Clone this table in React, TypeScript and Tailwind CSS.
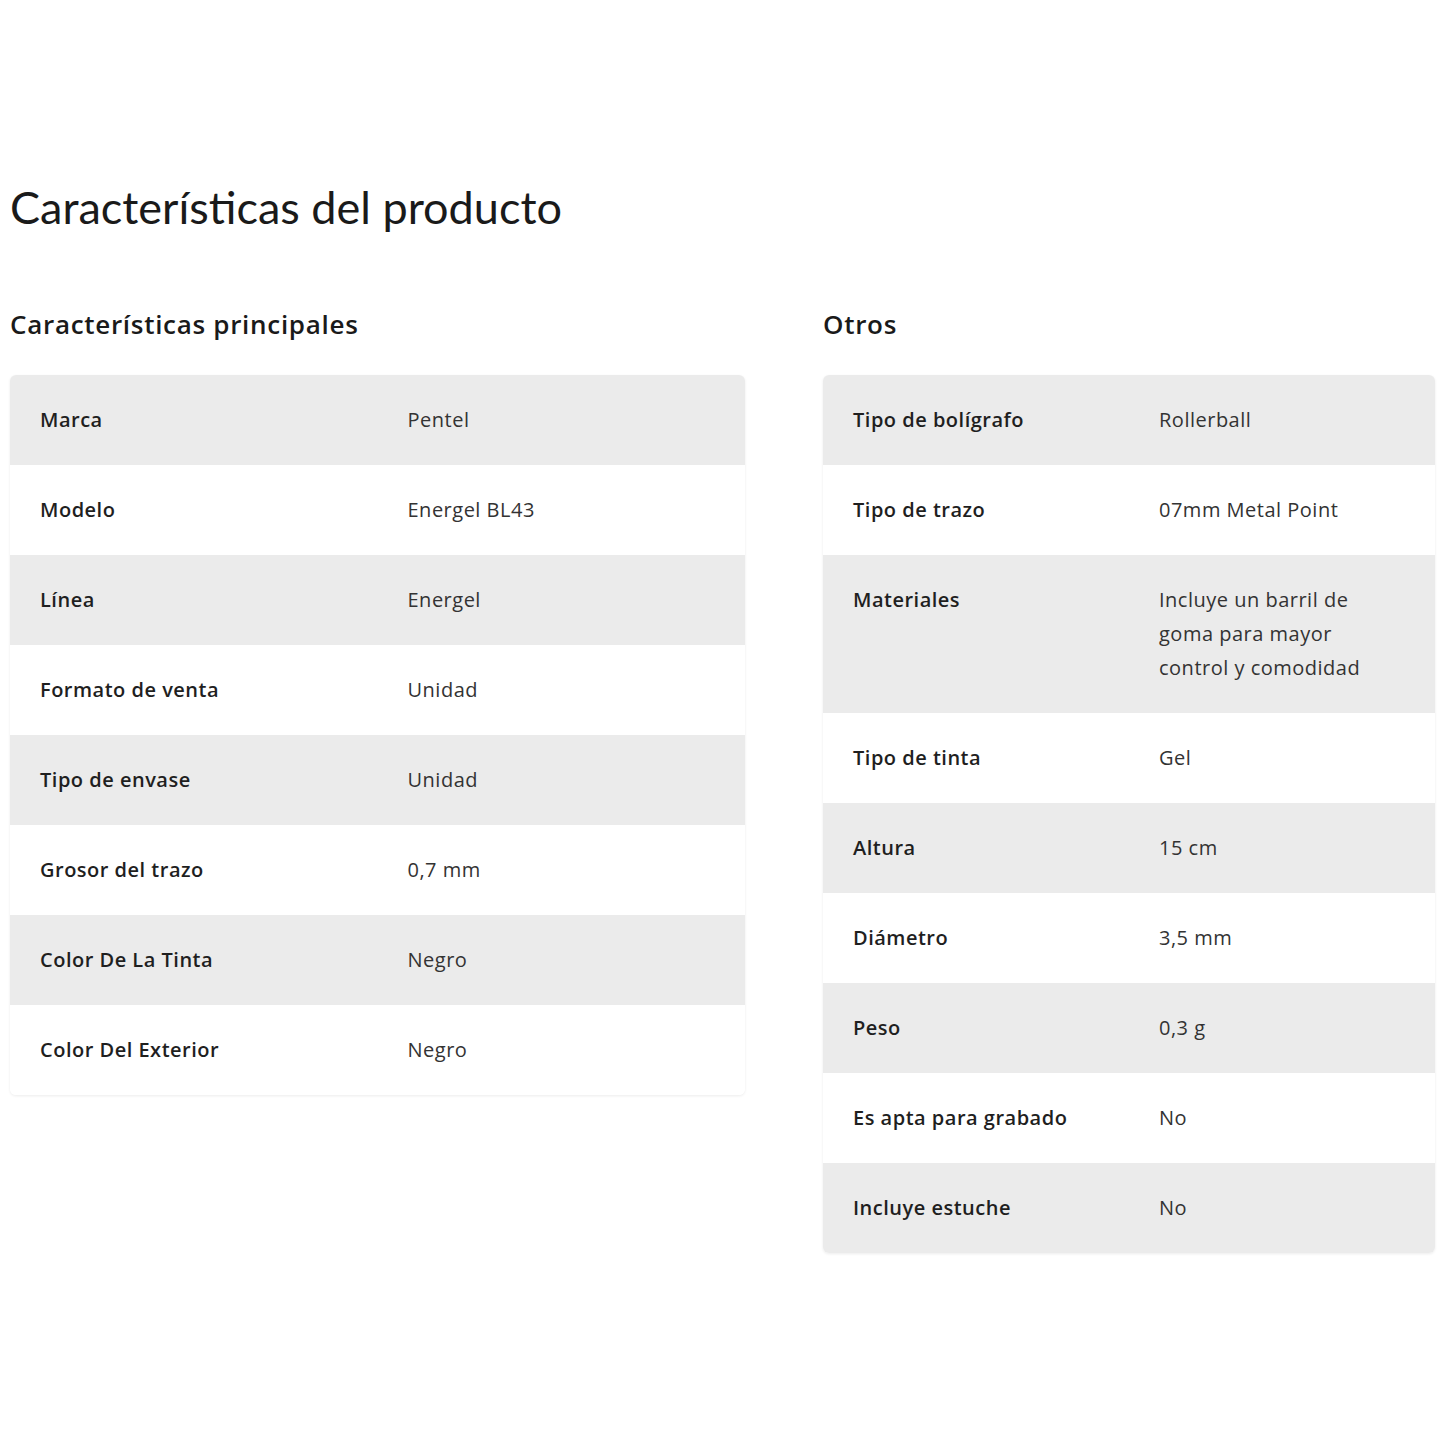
import React from "react";

type Row = { label: string; value: React.ReactNode };

const principales: Row[] = [
  { label: "Marca", value: "Pentel" },
  { label: "Modelo", value: "Energel BL43" },
  { label: "Línea", value: "Energel" },
  { label: "Formato de venta", value: "Unidad" },
  { label: "Tipo de envase", value: "Unidad" },
  { label: "Grosor del trazo", value: "0,7 mm" },
  { label: "Color De La Tinta", value: "Negro" },
  { label: "Color Del Exterior", value: "Negro" },
];

const otros: Row[] = [
  { label: "Tipo de bolígrafo", value: "Rollerball" },
  { label: "Tipo de trazo", value: "07mm Metal Point" },
  {
    label: "Materiales",
    value: (
      <>
        Incluye un barril de
        <br />
        goma para mayor
        <br />
        control y comodidad
      </>
    ),
  },
  { label: "Tipo de tinta", value: "Gel" },
  { label: "Altura", value: "15 cm" },
  { label: "Diámetro", value: "3,5 mm" },
  { label: "Peso", value: "0,3 g" },
  { label: "Es apta para grabado", value: "No" },
  { label: "Incluye estuche", value: "No" },
];

function Table({ rows }: { rows: Row[] }) {
  return (
    <div className="rounded-md overflow-hidden shadow-[0_1px_3px_rgba(0,0,0,0.08)]">
      {rows.map((r, i) => (
        <div
          key={i}
          className={`grid grid-cols-2 text-[20px] leading-[34px] tracking-[0.5px] ${
            i % 2 === 0 ? "bg-[#ebebeb]" : "bg-white"
          }`}
        >
          <div className="px-[30px] py-[28px] font-semibold text-[#1f1f1f]">{r.label}</div>
          <div className="px-[30px] py-[28px] text-[#333333]">{r.value}</div>
        </div>
      ))}
    </div>
  );
}

export default function App() {
  return (
    <div
      className="min-h-[1445px] bg-white px-[10px] pt-[180px]"
      style={{ fontFamily: "'Open Sans', Lato, sans-serif" }}
    >
      <h1
        className="text-[45px] leading-[54px] font-normal text-[#1a1a1a]"
        style={{ fontFamily: "Lato, sans-serif" }}
      >
        Características del producto
      </h1>
      <div className="mt-[73px] flex gap-[78px]">
        <div className="w-[735px]">
          <h2 className="text-[26px] leading-[34px] tracking-[0.7px] font-semibold text-[#1a1a1a] mb-[34px]">
            Características principales
          </h2>
          <Table rows={principales} />
        </div>
        <div className="w-[612px]">
          <h2 className="text-[26px] leading-[34px] tracking-[0.7px] font-semibold text-[#1a1a1a] mb-[34px]">
            Otros
          </h2>
          <Table rows={otros} />
        </div>
      </div>
    </div>
  );
}
